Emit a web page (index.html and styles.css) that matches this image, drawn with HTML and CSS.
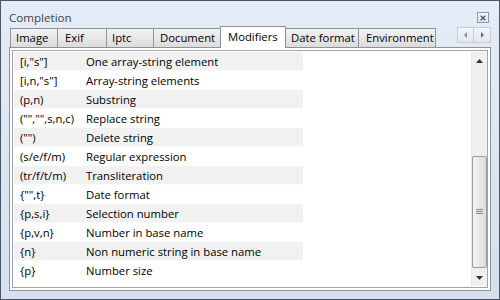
FILE: index.html
```html
<!DOCTYPE html>
<html lang="en">
<head>
  <meta charset="UTF-8">
  <title>Completion</title>
  <link rel="stylesheet" href="styles.css">
</head>
<body>
  <div class="janela">
    <div class="titulo">
      <span>Completion</span>
      <span class="fechar">
        <svg width="11" height="10" viewBox="0 0 11 10">
          <path d="M3 2.5 L8 7.5 M8 2.5 L3 7.5" stroke="#4a5666" stroke-width="1.4"/>
        </svg>
      </span>
    </div>

    <div class="abas">
      <div class="aba">Image</div>
      <div class="aba">Exif</div>
      <div class="aba">Iptc</div>
      <div class="aba">Document</div>
      <div class="aba ativa">Modifiers</div>
      <div class="aba">Date format</div>
      <div class="aba">Environment</div>
      <div class="setas">
        <span class="seta">
          <svg width="5" height="6" viewBox="0 0 5 6"><path d="M4 0 L1 3 L4 6 Z" fill="#7f8da3"/></svg>
        </span>
        <span class="seta">
          <svg width="5" height="6" viewBox="0 0 5 6"><path d="M1 0 L4 3 L1 6 Z" fill="#4a6fa8"/></svg>
        </span>
      </div>
    </div>

    <div class="painel">
      <div class="lista">
        <div class="linhas">
          <div class="linha"><span class="cod">[i,"s"]</span><span>One array-string element</span></div>
          <div class="linha"><span class="cod">[i,n,"s"]</span><span>Array-string elements</span></div>
          <div class="linha"><span class="cod">(p,n)</span><span>Substring</span></div>
          <div class="linha"><span class="cod">("","",s,n,c)</span><span>Replace string</span></div>
          <div class="linha"><span class="cod">("")</span><span>Delete string</span></div>
          <div class="linha"><span class="cod">(s/e/f/m)</span><span>Regular expression</span></div>
          <div class="linha"><span class="cod">(tr/f/t/m)</span><span>Transliteration</span></div>
          <div class="linha"><span class="cod">{"",t}</span><span>Date format</span></div>
          <div class="linha"><span class="cod">{p,s,i}</span><span>Selection number</span></div>
          <div class="linha"><span class="cod">{p,v,n}</span><span>Number in base name</span></div>
          <div class="linha"><span class="cod">{n}</span><span>Non numeric string in base name</span></div>
          <div class="linha"><span class="cod">{p}</span><span>Number size</span></div>
        </div>
        <div class="rolagem">
          <div class="botao-rolagem">
            <svg width="7" height="4" viewBox="0 0 7 4"><path d="M0 4 L3.5 0 L7 4 Z" fill="#333"/></svg>
          </div>
          <div class="trilho">
            <div class="polegar">
              <svg width="7" height="6" viewBox="0 0 7 6">
                <path d="M0 0.5 H7 M0 2.5 H7 M0 4.5 H7" stroke="#8a8a8a" stroke-width="1"/>
              </svg>
            </div>
          </div>
          <div class="botao-rolagem">
            <svg width="7" height="4" viewBox="0 0 7 4"><path d="M0 0 L3.5 4 L7 0 Z" fill="#333"/></svg>
          </div>
        </div>
      </div>
    </div>
  </div>
</body>
</html>
```

FILE: styles.css
```css
* {
  box-sizing: border-box;
}

body {
  margin: 0;
  font-family: "Open Sans", "Noto Sans", sans-serif;
  font-size: 11.3px;
  color: #000;
}

.janela {
  width: 500px;
  height: 300px;
  border: 1px solid #4b5566;
  background: linear-gradient(#e4ecf6, #d5e0ee);
  padding: 0 8px 8px 8px;
  display: flex;
  flex-direction: column;
}

.titulo {
  height: 26px;
  display: flex;
  align-items: center;
  justify-content: space-between;
  color: #444;
  font-size: 11.6px;
  padding-top: 7px;
}

.fechar {
  width: 12px;
  height: 11px;
  border: 1px solid #8b98aa;
  background: linear-gradient(#f4f7fb, #d9e1ec);
  display: flex;
  align-items: center;
  justify-content: center;
  margin-right: 2px;
}

.abas {
  display: flex;
  align-items: flex-end;
  height: 20px;
  padding-left: 1px;
  position: relative;
  z-index: 1;
}

.aba {
  height: 19px;
  border: 1px solid #8d929a;
  border-bottom: none;
  border-left: none;
  background: linear-gradient(#f2f2f2, #dcdcdc);
  padding-left: 5px;
  line-height: 18px;
  white-space: nowrap;
}

.aba:first-child {
  border-left: 1px solid #8d929a;
}

.aba:nth-child(1) { width: 48px; }
.aba:nth-child(2) { width: 49px; padding-left: 7px; }
.aba:nth-child(3) { width: 47px; }
.aba:nth-child(4) { width: 67px; padding-left: 6px; }
.aba:nth-child(6) { width: 73px; }
.aba:nth-child(7) { width: 77px; padding-left: 7px; }

.aba.ativa {
  width: 66px;
  height: 22px;
  margin-bottom: -1px;
  background: #fff;
  border-left: 1px solid #8d929a;
  margin-left: -1px;
  padding-left: 7px;
  line-height: 19px;
}

.setas {
  display: flex;
  margin-left: auto;
  margin-bottom: 4px;
  margin-right: 0;
}

.seta {
  width: 17px;
  height: 16px;
  border: 1px solid #c5ccd6;
  background: linear-gradient(#f3f5f8, #e2e6ec);
  display: flex;
  align-items: center;
  justify-content: center;
}

.seta + .seta {
  border-left: none;
}

.painel {
  flex: 1;
  border: 1px solid #8d929a;
  background: #fff;
  padding: 2px;
}

.lista {
  height: 100%;
  border: 1px solid #a0a4aa;
  display: flex;
  padding: 1px 0 1px 1px;
}

.linhas {
  flex: 1;
}

.linha {
  display: flex;
  height: 19px;
  align-items: center;
  width: 289px;
  padding-left: 6px;
  white-space: nowrap;
}

.linha:nth-child(odd) {
  background: #f1f1f1;
  border-bottom: 1px solid #fafafa;
}

.cod {
  width: 66px;
}

.rolagem {
  width: 16px;
  display: flex;
  flex-direction: column;
  background: #f0f0f0;
  border-left: 1px solid #e8e8e8;
}

.botao-rolagem {
  height: 17px;
  display: flex;
  align-items: center;
  justify-content: center;
}

.trilho {
  flex: 1;
  display: flex;
  flex-direction: column;
  justify-content: flex-end;
  padding-bottom: 1px;
}

.polegar {
  height: 112px;
  border: 1px solid #9a9a9a;
  border-radius: 2px;
  background: linear-gradient(to right, #f4f4f4, #dcdcdc);
  display: flex;
  align-items: center;
  justify-content: center;
}
```
